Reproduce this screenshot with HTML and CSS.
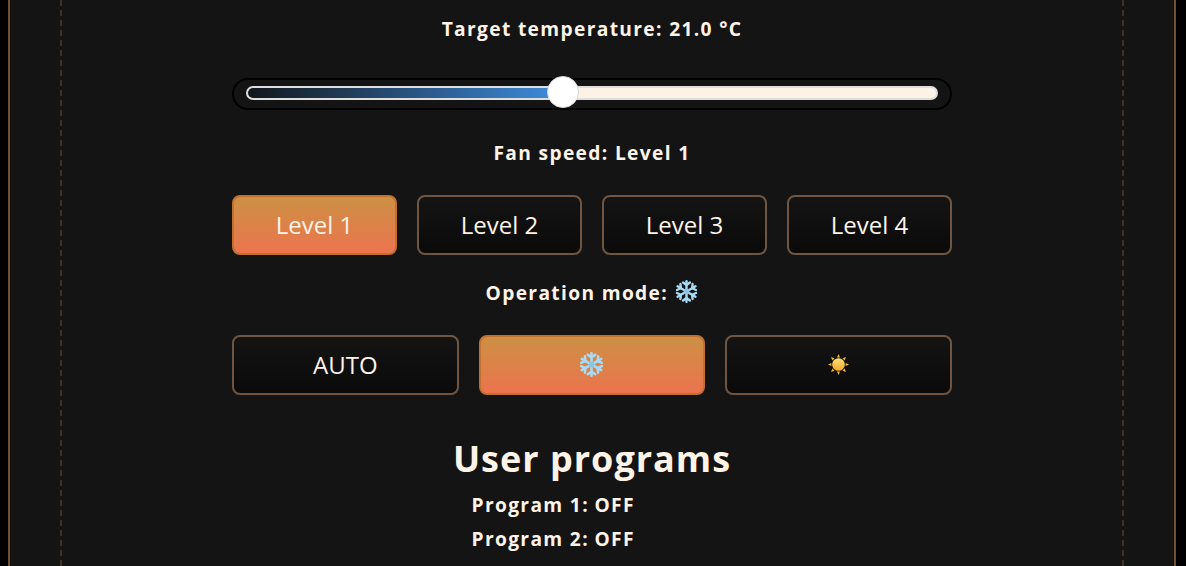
FILE: index.html
```html
<!DOCTYPE html>
<html lang="en">
<head>
    <meta charset="UTF-8">
    <meta name="viewport" content="width=device-width, initial-scale=1.0">
    <title>Thermostat</title>
    <link rel="stylesheet" href="styles.css">
</head>
<body>
    <div class="shell">
        <div class="panel">
            <div class="controls">
                <div class="label">Target temperature: 21.0 °C</div>
                <div class="slider">
                    <div class="track">
                        <div class="track-fill"></div>
                    </div>
                    <div class="thumb"></div>
                </div>

                <div class="label fan-label">Fan speed: Level 1</div>
                <div class="btn-row fan-row">
                    <button class="btn active">Level 1</button>
                    <button class="btn">Level 2</button>
                    <button class="btn">Level 3</button>
                    <button class="btn">Level 4</button>
                </div>

                <div class="label mode-label">Operation mode:
                    <svg class="icon-snow label-icon" viewBox="0 0 24 24"><use href="#snow"></use></svg>
                </div>
                <div class="btn-row mode-row">
                    <button class="btn">AUTO</button>
                    <button class="btn active"><svg class="icon-snow" viewBox="0 0 24 24"><use href="#snow"></use></svg></button>
                    <button class="btn">
                        <svg class="icon-sun" viewBox="0 0 24 24">
                            <defs>
                                <linearGradient id="sunFill" x1="0" y1="0" x2="0" y2="1">
                                    <stop offset="0" stop-color="#ffe27a"/>
                                    <stop offset="1" stop-color="#f4a62a"/>
                                </linearGradient>
                            </defs>
                            <g fill="#f2b33d">
                                <path d="M12 1l1.6 3.6h-3.2z"/>
                                <path d="M12 23l1.6-3.6h-3.2z"/>
                                <path d="M1 12l3.6-1.6v3.2z"/>
                                <path d="M23 12l-3.6-1.6v3.2z"/>
                                <path d="M4.2 4.2l3.7 1.4-2.3 2.3z"/>
                                <path d="M19.8 4.2l-3.7 1.4 2.3 2.3z"/>
                                <path d="M4.2 19.8l3.7-1.4-2.3-2.3z"/>
                                <path d="M19.8 19.8l-3.7-1.4 2.3-2.3z"/>
                            </g>
                            <circle cx="12" cy="12" r="6.6" fill="url(#sunFill)"/>
                        </svg>
                    </button>
                </div>

                <h2 class="programs-title">User programs</h2>
                <div class="program"><span>Program 1:</span><span>OFF</span></div>
                <div class="program"><span>Program 2:</span><span>OFF</span></div>
            </div>
        </div>
    </div>

    <svg class="sprite" width="0" height="0">
        <symbol id="snow" viewBox="0 0 24 24">
            <g stroke="#a8daf4" stroke-width="2.5" stroke-linecap="round" fill="none">
                <g id="snowArm">
                    <path d="M12 12V1.2"/>
                    <path d="M12 5.2L8.4 2.6M12 5.2l3.6-2.6"/>
                </g>
                <use href="#snowArm" transform="rotate(60 12 12)"/>
                <use href="#snowArm" transform="rotate(120 12 12)"/>
                <use href="#snowArm" transform="rotate(180 12 12)"/>
                <use href="#snowArm" transform="rotate(240 12 12)"/>
                <use href="#snowArm" transform="rotate(300 12 12)"/>
            </g>
            <circle cx="12" cy="12" r="2.8" fill="#8cc4e6"/>
        </symbol>
    </svg>
</body>
</html>
```

FILE: styles.css
```css
html, body {
    height: 100%;
}

body {
    margin: 0;
    background: #000;
    color: #fdf3e7;
    font-family: "Open Sans", sans-serif;
    overflow: hidden;
}

.shell {
    box-sizing: border-box;
    height: 566px;
    margin: 0 10px 0 8px;
    padding: 0 50px;
    background: #141414;
    border-left: 2px solid #6b5038;
    border-right: 2px solid #6b5038;
}

.panel {
    box-sizing: border-box;
    height: 100%;
    border-left: 2px dashed #3f3225;
    border-right: 2px dashed #3f3225;
    overflow: hidden;
}

.controls {
    width: 720px;
    margin: 0 auto;
    padding-top: 16px;
    text-align: center;
}

.label {
    font-size: 19.2px;
    line-height: 25px;
    font-weight: 700;
    letter-spacing: 0.07em;
}

.slider {
    position: relative;
    box-sizing: border-box;
    height: 32px;
    margin-top: 37px;
    padding: 6px 12px 8px;
    border: 2px solid #000;
    border-radius: 16px;
}

.track {
    box-sizing: border-box;
    height: 14px;
    background: #fdf2e6;
    border: 2px solid #dedede;
    border-radius: 7px;
    overflow: hidden;
}

.track-fill {
    width: 100%;
    max-width: 46%;
    height: 100%;
    background: linear-gradient(to right, #12161b, #3f8ee0);
}

.thumb {
    position: absolute;
    top: -4px;
    left: 313px;
    box-sizing: border-box;
    width: 32px;
    height: 32px;
    background: #fff;
    border: 1px solid #d8d8d8;
    border-radius: 50%;
}

.fan-label {
    margin-top: 30px;
}

.btn-row {
    display: grid;
    gap: 20px;
    margin-top: 30px;
}

.fan-row {
    grid-template-columns: repeat(4, 1fr);
}

.mode-row {
    grid-template-columns: repeat(3, 1fr);
}

.btn {
    display: flex;
    align-items: center;
    justify-content: center;
    height: 60px;
    padding: 0 0 1px;
    background: linear-gradient(to bottom, #141414, #0a0a0a);
    border: 2px solid #705640;
    border-radius: 8px;
    color: #fdf3e7;
    font-family: inherit;
    font-size: 24px;
    cursor: pointer;
}

.btn.active {
    background: linear-gradient(to bottom, #cc9044, #ec744e);
    border-color: #c1702f;
}

.mode-label {
    margin-top: 25px;
}

.icon-snow {
    width: 25px;
    height: 25px;
}

.label-icon {
    width: 23px;
    height: 23px;
    margin-left: 1px;
    vertical-align: -3px;
}

.icon-sun {
    width: 23px;
    height: 23px;
}

.programs-title {
    margin: 39px 0 0;
    font-size: 36px;
    line-height: 49px;
    font-weight: 700;
    letter-spacing: 1px;
}

.program {
    display: grid;
    grid-template-columns: 123px auto;
    justify-content: start;
    padding-left: 239.5px;
    margin-top: 9px;
    font-size: 19.2px;
    line-height: 25px;
    font-weight: 700;
    letter-spacing: 0.07em;
    text-align: left;
}

.sprite {
    position: absolute;
}
```
